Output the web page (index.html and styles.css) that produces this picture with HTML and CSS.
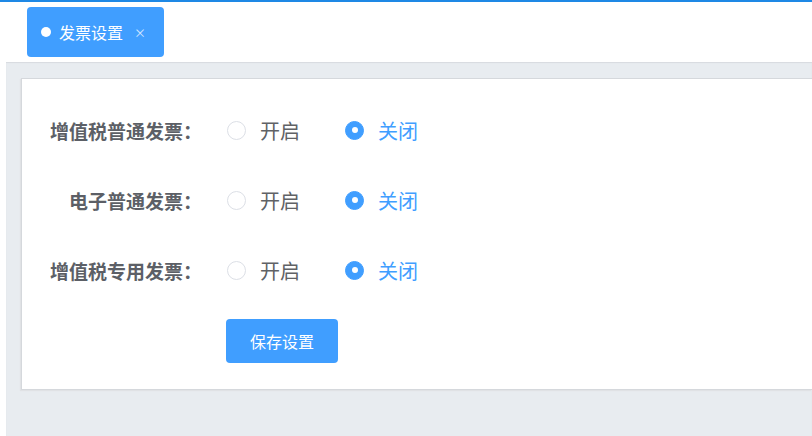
FILE: index.html
```html
<!DOCTYPE html>
<html lang="zh-CN">
<head>
  <meta charset="UTF-8" /><meta name="viewport" content="width=device-width,initial-scale=1"/>
  <title>发票设置</title>
  <link rel="stylesheet" href="styles.css">
</head>
<body>

  <!-- tabs -->
  <div class="tabbar">
    <div class="tab active">
      <span class="tab-dot"></span>
      <span class="tab-title">发票设置</span>
      <span class="tab-close">×</span>
    </div>
  </div>

  <!-- settings -->
  <div class="main">
    <div class="card">
      <div class="row">
        <label class="row-label">增值税普通发票：</label>
        <div class="radios">
          <span class="radio"><span class="radio-circle"></span>开启</span>
          <span class="radio checked"><span class="radio-circle"></span>关闭</span>
        </div>
      </div>
      <div class="row">
        <label class="row-label">电子普通发票：</label>
        <div class="radios">
          <span class="radio"><span class="radio-circle"></span>开启</span>
          <span class="radio checked"><span class="radio-circle"></span>关闭</span>
        </div>
      </div>
      <div class="row">
        <label class="row-label">增值税专用发票：</label>
        <div class="radios">
          <span class="radio"><span class="radio-circle"></span>开启</span>
          <span class="radio checked"><span class="radio-circle"></span>关闭</span>
        </div>
      </div>
      <div class="actions">
        <button class="btn-save">保存设置</button>
      </div>
    </div>
  </div>

</body>
</html>
```

FILE: styles.css
```css
html, body { margin: 0; padding: 0; }
body { font-family: "Noto Sans CJK SC", "Liberation Sans", sans-serif; background: #fff; color: #606266; overflow: hidden; height: 436px; }

.tabbar { height: 60px; border-top: 2px solid #1e88e5; display: flex; align-items: flex-start; padding-left: 27px; }
.tab { margin-top: 5px; height: 50px; width: 137px; box-sizing: border-box; border-radius: 4px; background: #409eff; color: #fff; display: flex; align-items: center; padding-left: 14px; }
.tab-dot { width: 10px; height: 10px; border-radius: 50%; background: #fff; margin-right: 8px; }
.tab-title { font-size: 16px; line-height: 1; }
.tab-close { font-size: 12px; margin-left: 11px; color: #d6e8ff; }

.main { margin-left: 6px; height: 374px; background: #e8ecf0; box-shadow: inset 0 1px 1px #d8dbdf; padding: 16px 0 0 15px; box-sizing: border-box; }
.card { background: #fff; border: 1px solid #d5d8dc; border-right: none; box-shadow: -1px 1px 1px #e0e2e5; padding: 16px 0 26px; }

.row { display: flex; align-items: center; height: 70px; }
.row-label { width: 180px; text-align: right; font-size: 19px; font-weight: bold; color: #5c5f66; }
.radios { display: flex; align-items: center; margin-left: 25px; }
.radio { display: flex; align-items: center; font-size: 20px; color: #606266; margin-right: 45px; }
.radio-circle { width: 19px; height: 19px; box-sizing: border-box; border: 1px solid #dcdfe6; border-radius: 50%; margin-right: 14px; position: relative; }
.radio.checked { color: #409eff; }
.radio.checked .radio-circle { background: #409eff; border-color: #409eff; }
.radio.checked .radio-circle::after { content: ""; position: absolute; left: 50%; top: 50%; width: 6px; height: 6px; margin: -3px 0 0 -3px; border-radius: 50%; background: #fff; }

.actions { padding-left: 204px; margin-top: 14px; }
.btn-save { width: 112px; height: 44px; border: none; border-radius: 4px; background: #409eff; color: #fff; font-family: inherit; font-size: 16px; cursor: pointer; }
```
